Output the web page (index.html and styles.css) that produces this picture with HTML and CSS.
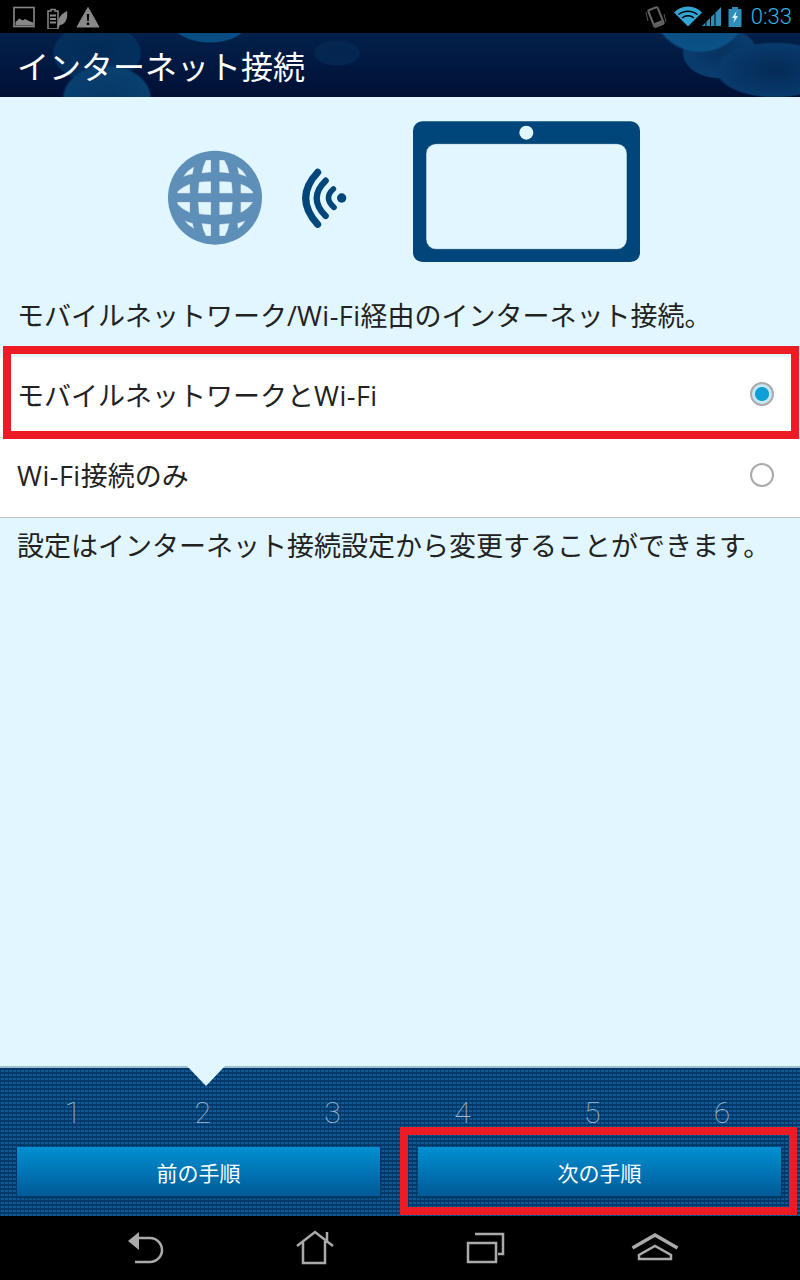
FILE: index.html
```html
<!DOCTYPE html>
<html>
<head>
  <title>インターネット接続</title>
  <link rel="stylesheet" href="styles.css">
</head>
<body>
  <div class="screen">
    <div class="status-bar">
      <div class="status-left">
        <svg class="icon" width="24" height="24" viewBox="0 0 24 24">
          <rect x="2" y="7" width="20" height="19" fill="none" stroke="#888" stroke-width="1.6" transform="translate(0 -4.5)"/>
          <path d="M3.5 20.5V17l4-3.5 3 2 2.5-1.5 3 1.5 2 1 3 1v3z" fill="#888"/>
        </svg>
        <svg class="icon" width="24" height="24" viewBox="0 0 24 24">
          <path d="M4 7h3V5.500h4V7h3v18H4z" fill="none" stroke="#888" stroke-width="1.500" transform="translate(0 -1)"/>
          <path d="M7 10h6v2H7zM7 13.500h6v2H7zM7 17h6v2H7z" fill="#888" transform="translate(-1 -.5)"/>
          <path d="M17 25c-1-6 0-14 9-18 1 7-1 13-7 14z" fill="#888" transform="translate(-3 -1)"/>
        </svg>
        <svg class="icon warn" width="24" height="24" viewBox="0 0 24 24">
          <path d="M12 2.500 23 22H1z" fill="#888" stroke="#888" stroke-linejoin="round"/>
          <path d="M10.800 9h2.400l-.4 7h-1.600zM10.800 17.500h2.400V20h-2.400z" fill="#000"/>
        </svg>
      </div>
      <div class="status-right">
        <svg class="icon" width="22" height="24" viewBox="0 0 22 24">
          <g transform="rotate(-22 11 12)">
            <rect x="6" y="3" width="10" height="18" rx="1.500" fill="none" stroke="#666" stroke-width="2"/>
            <rect x="7" y="17" width="8" height="3" fill="#666"/>
          </g>
          <path d="M1 7 3 16M19 9l2 8" stroke="#555" fill="none"/>
        </svg>
        <svg class="icon wifi" width="28" height="22" viewBox="0 0 28 22">
          <path d="M0 6.500C7-1.500 21-1.500 28 6.500L14 20.500z" fill="#33a5d5"/>
          <path d="M4.500 8.500c5.500-4.500 13.500-4.500 19 0M8 12c3.500-3 8.500-3 12 0" stroke="#000" stroke-width="1.500" fill="none"/>
        </svg>
        <svg class="icon signal" width="20" height="22" viewBox="0 0 20 22">
          <path d="M0 20 3.500 16.500V20zM4.500 15.500 8 12v8H4.500zM9 11l3.500-3.500V20H9zM13.500 6.500 19 1v19h-5.500z" fill="#2f8fb8"/>
        </svg>
        <svg class="icon battery" width="14" height="22" viewBox="0 0 14 22">
          <path d="M4 1h6v2h3.500v18H.5V3H4z" fill="#2f8fb8"/>
          <path d="M8.500 5 4 12h2.500l-1 5L10 10H7.500z" fill="#d8f2fb"/>
        </svg>
        <span class="clock">0:33</span>
      </div>
    </div>

    <div class="title-bar">
      <h1>インターネット接続</h1>
    </div>

    <main class="content">
      <svg class="hero" width="500" height="160" viewBox="0 0 1500 480">
        <circle cx="195" cy="263" r="141" fill="#5d8fb8"/>
        <path fill="#e0f6fe" stroke="#8a9aa8" stroke-width="1" d="M100 200Q112 180 132 170L128 192Q112 195 100 200ZM168 150H183V187L155 190Q158 168 168 150ZM208 150H223Q235 168 238 190L208 187ZM262 170Q280 180 290 200Q275 195 266 192ZM82 245Q100 228 120 222V250H82ZM147 216Q165 214 183 214V250H144ZM208 214Q230 214 245 216L248 250H208ZM272 222Q295 228 309 245V250H272ZM82 276H120V308Q98 300 82 282ZM144 276H183V315Q165 315 147 312ZM208 276H248L245 312Q228 315 208 315ZM272 276H309Q295 298 272 308ZM104 332 128 340 132 356Q115 348 104 332ZM155 340 183 343V378H168Q158 360 155 340ZM208 343 238 340Q235 360 225 378H208ZM262 340 286 332Q278 348 264 356Z"/>
        <g fill="none" stroke="#00467b" stroke-linecap="round">
          <path d="M503 187Q431 264 503 343" stroke-width="21"/>
          <path d="M527 212Q473 264 527 318" stroke-width="19"/>
          <path d="M550 237Q520 264 552 292" stroke-width="17"/>
        </g>
        <circle cx="575" cy="264" r="14" fill="#00467b"/>
        <rect x="789" y="34" width="681" height="422" rx="28" fill="#00467b"/>
        <rect x="828" y="101" width="603" height="317" rx="30" fill="#e1f6fe" stroke="#003358" stroke-width="1.500"/>
        <circle cx="1129" cy="68" r="21" fill="#e1f6fe"/>
      </svg>

      <p class="intro">モバイルネットワーク/<span class="latin">Wi-Fi</span>経由のインターネット接続。</p>

      <div class="options">
        <div class="option">
          <span>モバイルネットワークと<span class="latin">Wi-Fi</span></span>
          <span class="radio checked"></span>
        </div>
        <div class="option">
          <span><span class="latin">Wi-Fi</span>接続のみ</span>
          <span class="radio"></span>
        </div>
      </div>

      <p class="note">設定はインターネット接続設定から変更することができます。</p>
    </main>

    <div class="stepper">
      <div class="notch"></div>
      <div class="steps">
        <span>1</span><span>2</span><span>3</span><span>4</span><span>5</span><span>6</span>
      </div>
      <div class="buttons">
        <button class="step-btn">前の手順</button>
        <button class="step-btn">次の手順</button>
      </div>
    </div>

    <div class="nav-bar">
      <svg width="40" height="40" viewBox="0 0 40 40">
        <path d="M12 10H25A12 12 0 0 1 25 34H10" fill="none" stroke="#aaa" stroke-width="2.500"/>
        <path d="M3 13 14 4V22z" fill="#aaa"/>
      </svg>
      <svg width="40" height="40" viewBox="0 0 40 40">
        <path d="M2 18 20 4 38 18M8 13V35H30V13M32 15V4" fill="none" stroke="#aaa" stroke-width="2.500"/>
      </svg>
      <svg width="40" height="40" viewBox="0 0 40 40">
        <rect x="3" y="15" width="28" height="19" fill="none" stroke="#aaa" stroke-width="2.500"/>
        <path d="M10 6H38V26H33" fill="none" stroke="#aaa" stroke-width="2.500"/>
      </svg>
      <svg width="48" height="40" viewBox="0 0 48 40">
        <path d="M1.500 20 24 7 46.500 20" fill="none" stroke="#aaa" stroke-width="3.500"/>
        <path d="M8 31V27L24 18 40 27V31z" fill="none" stroke="#aaa" stroke-width="2.500"/>
      </svg>
    </div>

    <div class="highlight highlight-option"></div>
    <div class="highlight highlight-next"></div>
  </div>
</body>
</html>
```

FILE: styles.css
```css
* {
  box-sizing: border-box;
}

body {
  margin: 0;
  background: #000;
  font-family: "Open Sans", "Noto Sans CJK JP", sans-serif;
}

.screen {
  position: relative;
  width: 800px;
  height: 1280px;
  display: flex;
  flex-direction: column;
  overflow: hidden;
}

.icon {
  display: block;
}

.status-bar {
  height: 33px;
  flex: none;
  background: #000;
  display: flex;
  justify-content: space-between;
  align-items: center;
  padding: 0 8px 0 12px;
}

.status-left {
  display: flex;
  align-items: center;
  gap: 8px;
}

.status-right {
  display: flex;
  align-items: center;
}

.wifi {
  margin-left: 7px;
}

.battery {
  margin-left: 6px;
}

.clock {
  margin-left: 9px;
  color: #33b5e5;
  font-family: Roboto, sans-serif;
  font-size: 22px;
  font-weight: 300;
}

.title-bar {
  height: 64px;
  flex: none;
  padding-left: 17px;
  display: flex;
  align-items: center;
  background-color: #021f4a;
  background-image:
    radial-gradient(circle 50px at 700px -30px, #094578 0, #0b5287 95%, transparent 100%),
    radial-gradient(ellipse 60px 28px at 775px 37px, #052a58 0, #083a6b 94%, transparent 100%),
    radial-gradient(ellipse 38px 26px at 720px 20px, #07325f 0, #093d6e 94%, transparent 100%),
    radial-gradient(ellipse 38px 20px at 210px -10px, #084476 0, #094f84 94%, transparent 100%),
    radial-gradient(ellipse 45px 33px at 107px 65px, #073866 0, #08406f 94%, transparent 100%),
    radial-gradient(ellipse 45px 30px at 97px 20px, #032a56 0, #04305e 94%, transparent 100%),
    radial-gradient(ellipse 24px 13px at 337px 20px, #03244f 0, #042752 90%, transparent 100%),
    linear-gradient(#02214b, #010f35);
}

.title-bar h1 {
  margin: 0;
  color: #fff;
  font-size: 32px;
  font-weight: 400;
}

.content {
  flex: 1;
  background: #e1f6fe;
  color: #222;
  font-size: 27px;
}

.latin {
  letter-spacing: 0.5px;
}

.hero {
  display: block;
  margin: 13px 0 0 150px;
}

.intro {
  margin: 26px 0 0;
  padding-left: 17px;
  line-height: 40px;
  height: 61px;
}

.options {
  background: #fff;
  border-bottom: 1px solid #c4c4c4;
}

.option {
  height: 80px;
  padding: 0 26px 6px 17px;
  display: flex;
  justify-content: space-between;
  align-items: center;
}

.option + .option {
  border-top: 1px solid #ddd;
}

.radio {
  width: 24px;
  height: 24px;
  border: 2px solid #aaa;
  border-radius: 50%;
  background: #fff;
}

.radio.checked {
  background: radial-gradient(circle, #0f9ed5 0 6.5px, #c5e8f4 7.5px);
}

.note {
  margin: 8px 0 0;
  padding-left: 17px;
  line-height: 40px;
}

.stepper {
  position: relative;
  height: 150px;
  flex: none;
  border-top: 2px solid #9fbccd;
  background-color: #0c5a96;
  background-image:
    linear-gradient(#00396a 2px, transparent 2px),
    linear-gradient(90deg, #00396a 1px, transparent 1px);
  background-size: 4px 4px;
}

.notch {
  position: absolute;
  top: -2px;
  left: 187px;
  width: 38px;
  height: 20px;
  background: #e1f6fe;
  clip-path: polygon(0 0, 100% 0, 50% 100%);
}

.steps {
  padding: 30px 13px 0 8px;
  display: grid;
  grid-template-columns: repeat(6, 1fr);
  height: 79px;
  color: #a3bbce;
  font-family: Roboto, sans-serif;
  font-size: 30px;
  font-weight: 100;
  line-height: 30px;
  text-align: center;
}

.buttons {
  display: flex;
  gap: 38px;
  padding-left: 17px;
}

.step-btn {
  width: 363px;
  height: 50px;
  padding: 0;
  border: none;
  border-bottom: 1px solid #003c68;
  background: linear-gradient(#0090d2, #005a97);
  box-shadow: 1px 1px 2px #00335c;
  color: #fff;
  font-family: inherit;
  font-size: 21px;
}

.nav-bar {
  height: 64px;
  flex: none;
  background: #000;
  display: grid;
  grid-template-columns: repeat(4, 170px);
  justify-items: center;
  align-items: center;
  padding-left: 60px;
}

.highlight {
  position: absolute;
  border: 8px solid #ed1c24;
}

.highlight-option {
  left: 3px;
  top: 346px;
  width: 796px;
  height: 93px;
}

.highlight-next {
  left: 400px;
  top: 1127px;
  width: 397px;
  height: 88px;
}
```
